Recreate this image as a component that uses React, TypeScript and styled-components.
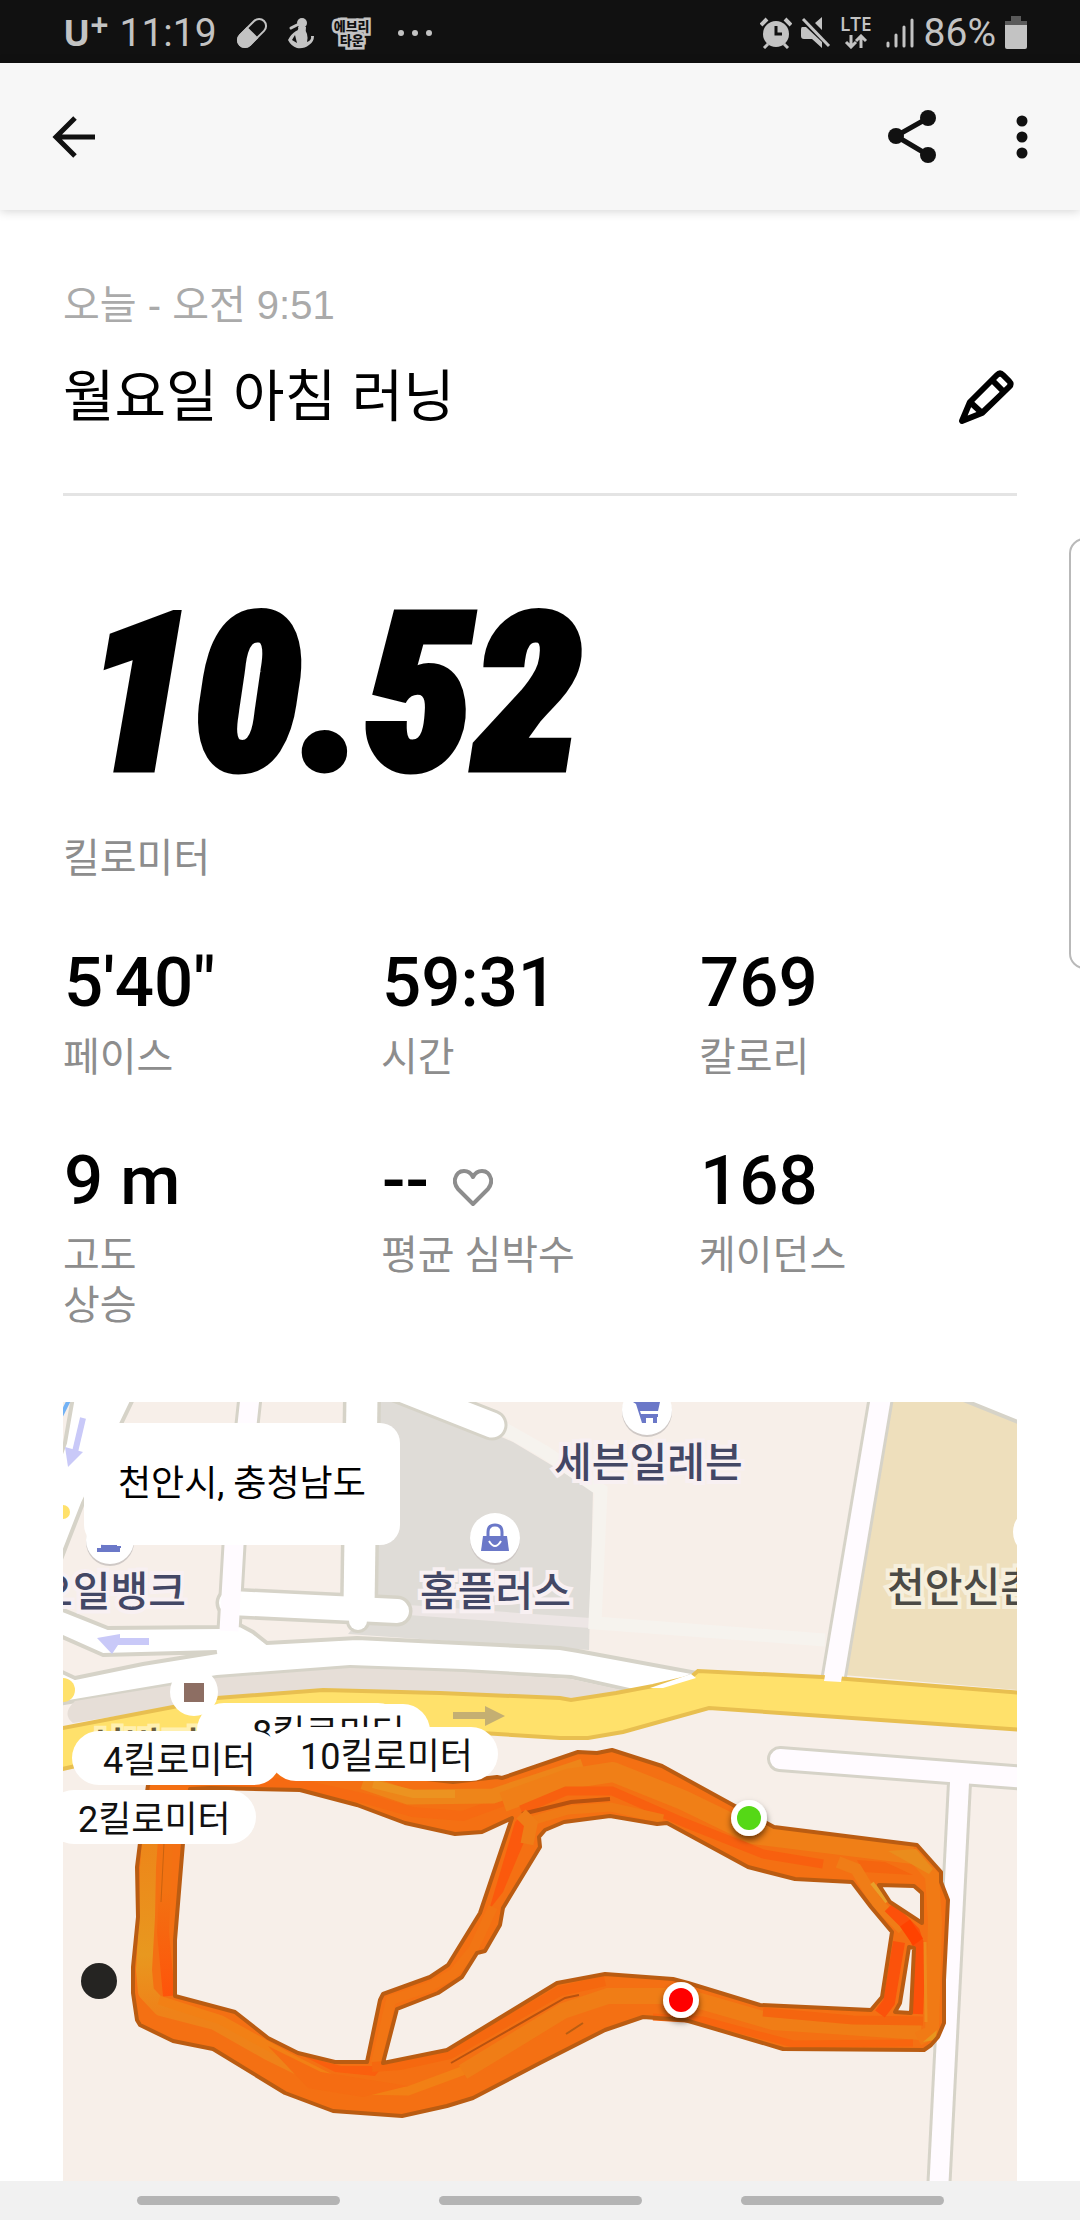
import React from 'react';
import styled, { createGlobalStyle } from 'styled-components';

const sans = `Roboto, "Liberation Sans", "Noto Sans CJK KR", sans-serif`;
const textSans = `"Liberation Sans", "Noto Sans CJK KR", sans-serif`;

const GlobalStyle = createGlobalStyle`
  * { box-sizing: border-box; }
  body { margin: 0; background: #fff; font-family: ${sans}; color: #000; }
`;

const Screen = styled.div`
  display: flex;
  flex-direction: column;
  height: 100vh;
  min-height: 1600px;
  position: relative;
  overflow: hidden;
`;

const StatusBar = styled.div`
  display: flex;
  justify-content: space-between;
  align-items: center;
  height: 63px;
  flex: none;
  padding: 2px 53px 0 63px;
  background: #111;
  color: #c3c3c3;
  font-size: 39px;
`;

const StatusGroup = styled.div<{ $gap: number }>`
  display: flex;
  align-items: center;
  gap: ${(p) => p.$gap}px;
`;

const Carrier = styled.span`
  display: flex;
  font: 700 36px/40px "Open Sans", sans-serif;
  margin-right: -8px;
`;

const CarrierPlus = styled.sup`
  font-size: 32px;
  line-height: 24px;
  vertical-align: top;
`;

const TownBadge = styled.span`
  display: flex;
  flex-direction: column;
  align-items: center;
  width: 36px;
  font: 900 13px/14px "Noto Sans CJK KR", sans-serif;
  color: #111;
  -webkit-text-stroke: 5px #c3c3c3;
  paint-order: stroke fill;
`;

const Network = styled.span`
  display: flex;
  flex-direction: column;
  align-items: center;
  gap: 2px;
  font: 600 19px/16px "Open Sans", sans-serif;
`;

const AppBar = styled.header`
  display: flex;
  align-items: center;
  justify-content: space-between;
  height: 147px;
  flex: none;
  padding: 0 30px 0 46px;
  background: #f7f7f7;
  box-shadow: 0 1px 10px rgba(0, 0, 0, 0.18);
  z-index: 1;
`;

const Actions = styled.div`
  display: flex;
  align-items: center;
  gap: 54px;
`;

const IconButton = styled.button`
  display: flex;
  padding: 0;
  border: 0;
  background: none;
  color: inherit;
  cursor: pointer;
`;

const Main = styled.main`
  display: flex;
  flex-direction: column;
  flex: 1;
  min-height: 0;
  padding: 71px 63px 0;
`;

const DateLine = styled.p`
  margin: 0;
  font-family: ${textSans};
  font-size: 40px;
  line-height: 48px;
  color: #aaa;
`;

const TitleRow = styled.div`
  display: flex;
  align-items: center;
  justify-content: space-between;
  margin-top: 36px;
  padding-bottom: 64px;
  border-bottom: 3px solid #e4e4e4;
`;

const Title = styled.h1`
  margin: 0;
  font-family: ${textSans};
  font-size: 56px;
  line-height: 64px;
  font-weight: 400;
`;

const Distance = styled.div`
  margin-top: 99px;
  padding-left: 22px;
  font: italic 900 218px/200px "Roboto Condensed", Roboto, sans-serif;
  -webkit-text-stroke: 7px #000;
`;

const Caption = styled.p<{ $top?: number }>`
  margin: ${(p) => p.$top ?? 14}px 0 0;
  font-size: 40px;
  line-height: 50px;
  color: #8d8d8d;
`;

const Stats = styled.section`
  display: grid;
  grid-template-columns: repeat(3, 1fr);
  row-gap: 62px;
  margin-top: 63px;
`;

const StatValue = styled.div`
  display: flex;
  align-items: flex-end;
  gap: 24px;
  padding-left: 1px;
  font-size: 69px;
  line-height: 72px;
  font-weight: 500;
`;

const Heart = styled.svg`
  margin-bottom: 10px;
`;

const MapBox = styled.section`
  position: relative;
  flex: 1;
  margin-top: 71px;
  overflow: hidden;
  background: #f7efe9;
`;

const MapArt = styled.svg`
  display: block;
  width: 100%;
  height: 100%;
`;

const Poi = styled.span<{ $x: number; $y: number; $color?: string; $halo?: string }>`
  position: absolute;
  left: ${(p) => p.$x}px;
  top: ${(p) => p.$y}px;
  font: 500 41px/48px "Noto Sans CJK KR", sans-serif;
  white-space: nowrap;
  color: ${(p) => p.$color ?? '#434765'};
  -webkit-text-stroke: 8px ${(p) => p.$halo ?? '#f8f0f2'};
  paint-order: stroke fill;
`;

const Place = styled.div`
  position: absolute;
  left: 21px;
  top: 21px;
  padding: 37px 34px;
  border-radius: 20px;
  background: #fff;
  font-size: 36px;
  line-height: 48px;
`;

const KmPill = styled.span<{ $x: number; $y: number }>`
  position: absolute;
  left: ${(p) => p.$x}px;
  top: ${(p) => p.$y}px;
  min-width: 208px;
  height: 54px;
  padding: 0 25px 0 31px;
  border-radius: 27px;
  background: #fff;
  color: #111;
  font-size: 36px;
  line-height: 60px;
  white-space: nowrap;
`;

const EdgeHandle = styled.div`
  position: absolute;
  right: -20px;
  top: 538px;
  width: 31px;
  height: 431px;
  border: 2px solid #b9b9b9;
  border-radius: 18px;
  background: #fff;
`;

const NavBar = styled.nav`
  display: flex;
  align-items: center;
  justify-content: center;
  gap: 99px;
  height: 39px;
  flex: none;
  background: #f1f1f1;
`;

const NavKey = styled.button`
  width: 203px;
  height: 9px;
  padding: 0;
  border: 0;
  border-radius: 5px;
  background: #b4b4b4;
`;

const road = '#d6d3c8';

type RoadProps = { d: string; outer: number; inner: number; cap?: 'round' | 'butt'; fill?: string };

const RoadCase = ({ d, outer, cap = 'butt' }: RoadProps) => (
  <path d={d} stroke={road} strokeWidth={outer} strokeLinecap={cap} fill="none" />
);
const RoadFill = ({ d, inner, cap = 'butt', fill = '#fff' }: RoadProps) => (
  <path d={d} stroke={fill} strokeWidth={inner} strokeLinecap={cap} fill="none" />
);

const streets: RoadProps[] = [
  { d: 'M330-16L429 23', outer: 31, inner: 25, cap: 'round' },
  { d: 'M299-5L296 205', outer: 38, inner: 31 },
  { d: 'M168 201L334 209', outer: 31, inner: 24, cap: 'round' },
  { d: 'M295 212V219', outer: 24, inner: 18, cap: 'round' },
  { d: 'M187-5L171 143L166 229', outer: 25, inner: 19, fill: '#fffbff' },
  { d: 'M818-5L770 280', outer: 26, inner: 20, fill: '#fffbff' },
  { d: 'M717 357L964 376', outer: 26, inner: 20, cap: 'round', fill: '#fffbff' },
  { d: 'M897 371L875 800', outer: 25, inner: 19, fill: '#fffbff' },
];

const routeOutline =
  'M85 383L100 366L214 360L390 380L434 375L439 376L515 350L534 351L549 348L599 364L670 403L711 425L854 443L878 470V480L885 498L881 578V621L875 635L868 643L861 648L720 647L622 618L580 615L542 628L477 661L410 696L384 704L339 714L270 709L222 691L150 647L110 639L77 623L74 618L70 591V565L75 515L74 465L77 441Z' +
  'M147 386L237 388L294 403L342 421L392 432L419 430L449 416L417 511L385 563L367 575L320 592L317 598L304 660L272 660L235 651L205 636L172 610L112 594V538L120 441L127 387Z' +
  'M320 661L334 607L375 591L399 575L414 551L422 549L437 523L440 506L477 445L476 435L482 428L501 420L547 414L594 422L604 421L685 465L732 477L789 480L808 505L829 530L819 595L808 608L697 603L625 581L610 577L542 572L494 581L384 648Z' +
  'M816 483L851 484L859 491V521L827 500Z' +
  'M846 545L851 546L848 611L832 610L837 601Z';

const MapDrawing = () => (
  <MapArt viewBox="0 0 954 779" preserveAspectRatio="xMinYMin slice" aria-hidden="true" fill="none">
    <defs>
      <filter id="pinShadow" x="-50%" y="-50%" width="200%" height="200%">
        <feDropShadow dx="0" dy="4" stdDeviation="3" floodOpacity="0.55" />
      </filter>
      <linearGradient id="amberLeft" x1="0" y1="380" x2="0" y2="610" gradientUnits="userSpaceOnUse">
        <stop offset="0" stopColor="#f07c16" />
        <stop offset="0.75" stopColor="#e8981f" />
        <stop offset="1" stopColor="#ef8219" />
      </linearGradient>
      <linearGradient id="redLeft" x1="0" y1="440" x2="0" y2="600" gradientUnits="userSpaceOnUse">
        <stop offset="0.3" stopColor="#f27212" />
        <stop offset="1" stopColor="#ff520a" />
      </linearGradient>
    </defs>

    {/* blocks */}
    <path d="M312 0H360L450 40L530 88L526 248L400 240L285 232L312 200Z" fill="#dfdcd7" />
    <path d="M345 208L527 221" stroke="#ede6e5" strokeWidth="10" />
    <path d="M436 24L482 50L538 88L532 221L762 238" stroke="#f6f3ee" strokeWidth="13" />
    <path d="M828 0H904L954 20V288L780 273Z" fill="#eedfbc" />
    <path d="M898-3L960 22V-3Z" fill="#fff" stroke={road} strokeWidth="4" />

    {/* white streets */}
    <path d="M10-5H71L20 101L-5 165V60L2 41Z" fill="#fff" stroke={road} strokeWidth="4" />
    <path d="M-2 14L6-2" stroke="#72b2f5" strokeWidth="4" />
    {streets.map((s) => (
      <RoadCase key={s.d} {...s} />
    ))}
    <path
      d="M-5 206L45 226L157 225L177 223L190 230L204 241L294 236L497 246L515 249L634 271L590 290L566 288L508 275L400 269L287 265L154 275L-5 302Z"
      fill="#fff"
      stroke={road}
      strokeWidth="4"
    />
    {streets.map((s) => (
      <RoadFill key={s.d} {...s} />
    ))}
    <path d="M-5 233L40 253L154 250L80 262L12 276L-5 268Z" fill="#f7efe9" stroke={road} strokeWidth="4" strokeLinejoin="round" />
    <path d="M154 250L200 243" stroke="#fff" strokeWidth="6" />

    {/* main road */}
    <path d="M12 299L154 276L287 266L400 270L508 277L568 290L508 300L380 294L260 290L154 298L10 321Q-2 312 12 299Z" fill="#e6ded7" />
    <path
      d="M-5 327L110 305L154 296L260 288L377 291L497 296L508 298L553 291L590 284L628 275L635 269L759 275L960 291V328L646 306L560 330L525 336L497 336L370 328L230 326L120 340L-5 368Z"
      fill="#ffe16b"
      stroke="#e8bf50"
      strokeWidth="4"
    />
    <path d="M587 286L628 272L633 276L600 286Z" fill="#fff" />
    <path d="M780 268L778 280L761 279L763 268Z" fill="#fffbff" />
    <circle cx="0" cy="288" r="12" fill="#ffe16b" />
    <circle cx="0" cy="110" r="7" fill="#ffe16b" />

    {/* one-way arrows */}
    <path d="M20 16L12 50" stroke="#c9c9f8" strokeWidth="6" />
    <path d="M2 45L20 50L5 65Z" fill="#c9c9f8" />
    <path d="M34 236L57 232V236H86V243H55L49 252Z" fill="#c9c9f8" />
    <path d="M390 310H422V304L442 314L422 324V317H390Z" fill="#c4af72" />

    {/* place markers */}
    <g fill="#fff">
      <circle cx="432" cy="138" r="25" fill="#cfc9c6" />
      <circle cx="432" cy="136" r="25" />
      <circle cx="47" cy="140" r="24" fill="#cfc9c6" />
      <circle cx="47" cy="138" r="24" />
      <circle cx="584" cy="10" r="25" fill="#cfc9c6" />
      <circle cx="584" cy="8" r="25" />
      <circle cx="131" cy="290" r="24" />
      <circle cx="974" cy="130" r="24" />
    </g>
    <path d="M420 134H444L446 149H418Z" fill="#6b78c8" />
    <path d="M425 135V130Q425 123 432 123Q439 123 439 130V135" stroke="#6b78c8" strokeWidth="3" />
    <path d="M426 139Q432 149 438 139" stroke="#fff" strokeWidth="2" />
    <path d="M34 150V146H38V138H54V144H58V146H57V150Z" fill="#6b78c8" />
    <path d="M570 0H597L595 9H577L578 12H595V15H594V21H590V16H583V21H579L573 2Z" fill="#6b78c8" />
    <rect x="121" y="281" width="20" height="19" fill="#8d6e63" />

    {/* run route */}
    <path d={routeOutline} fillRule="evenodd" fill="#f47013" />
    <path d="M90 395L85 465L84 515L81 568L83 590L98 606L152 620L205 650L270 682" stroke="url(#amberLeft)" strokeWidth="16" strokeLinejoin="round" />
    <path d="M104 441L100 530L106 594" stroke="url(#redLeft)" strokeWidth="12" />
    <path d="M101 441L98 500" stroke="#c9620f" strokeWidth="1" />
    <path d="M96 598L158 618L225 655L290 688L345 689L410 665" stroke="#f28015" strokeWidth="9" />
    <path d="M205 644L258 670L345 684L300 695L245 686Z" fill="#f56c12" />
    <path d="M240 654L278 664H320L312 674L272 670Z" fill="#fa5f0e" />
    <path d="M150 378L236 382L300 396L350 410L400 414L460 392" stroke="#f66a12" strokeWidth="10" />
    <path d="M300 380L345 395L430 394L520 364" stroke="#ee8519" strokeWidth="15" />
    <path d="M310 382L350 392L392 392" stroke="#ec9320" strokeWidth="8" />
    <path d="M440 400L505 377L550 370L620 398L690 432L850 452" stroke="#f07f17" strokeWidth="20" strokeLinejoin="round" />
    <path d="M458 408L503 389H549L620 420L700 452L760 462" stroke="#f8600f" strokeWidth="9" />
    <path d="M459 412L508 400L547 397" stroke="#b8520f" strokeWidth="4" />
    <path d="M465 420L505 408L548 405L600 417" stroke="#f07a15" strokeWidth="9" />
    <path d="M452 420L458 414L466 418L461 440L440 490L426 508Z" fill="#fb590d" />
    <path d="M458 412L468 422L464 442" stroke="#ef7d17" strokeWidth="13" />
    <path d="M430 505L410 548L390 572L366 585L328 598L312 665" stroke="#f27514" strokeWidth="10" />
    <path d="M309 665L337 663L387 652L497 589L542 579" stroke="#f5680f" strokeWidth="10" />
    <path d="M388 661L502 596L516 593" stroke="#b8520f" strokeWidth="2" />
    <path d="M400 670L500 609L545 594L620 594L710 620L858 630" stroke="#f07d16" strokeWidth="16" />
    <path d="M503 632L520 621" stroke="#b85d12" strokeWidth="2" />
    <path d="M590 615L640 618L730 642L850 641" stroke="#f8650f" strokeWidth="7" />
    <path d="M700 610L790 618L860 619" stroke="#f5650f" strokeWidth="9" />
    <path d="M850 452L869 474L872 520L869 630L855 637" stroke="#f17a15" strokeWidth="14" />
    <path d="M825 449L853 447L870 467L866 472Z" fill="#ea8c1c" />
    <path d="M794 458L822 460L850 473L800 470Z" fill="#f5650f" />
    <path d="M775 460L793 467L813 500L840 527" stroke="#f07d17" strokeWidth="12" />
    <path d="M809 481L824 500" stroke="#e8a02a" strokeWidth="4" />
    <path d="M826 505L851 530L857 548L854 612" stroke="#fc500a" strokeWidth="12" />
    <path d="M842 521L855 540" stroke="#ff4200" strokeWidth="12" />
    <path d="M836 540L826 600L817 612" stroke="#fb520b" strokeWidth="12" />
    <path d="M862 540L863 620" stroke="#ef8b1d" strokeWidth="3" />
    <path d="M860 640L874 628L872 638Z" fill="#e8961e" />
    <path d={routeOutline} fillRule="evenodd" stroke="#ba5c12" strokeWidth="4" strokeLinejoin="round" />

    <g filter="url(#pinShadow)">
      <circle cx="686" cy="416" r="18" fill="#fff" />
      <circle cx="618" cy="598" r="18" fill="#fff" />
    </g>
    <circle cx="686" cy="416" r="12" fill="#55d816" />
    <circle cx="618" cy="598" r="12" fill="#f00" />
    <circle cx="36" cy="579" r="18" fill="#252422" />
  </MapArt>
);

const HeartIcon = () => (
  <Heart width="40" height="38" viewBox="0 0 40 38" fill="none" stroke="#8d8d8d" strokeWidth="4" strokeLinejoin="round" aria-hidden="true">
    <path d="M20 35L5 20Q1 15 2 10Q4 2 11 2Q17 2 20 8Q23 2 29 2Q36 2 38 10Q39 15 35 20Z" />
  </Heart>
);

const stats: { value: string; label: React.ReactNode; heart?: boolean }[] = [
  { value: `5'40"`, label: '페이스' },
  { value: '59:31', label: '시간' },
  { value: '769', label: '칼로리' },
  { value: '9 m', label: <>고도<br />상승</> },
  { value: '--', label: '평균 심박수', heart: true },
  { value: '168', label: '케이던스' },
];

export default function App() {
  return (
    <Screen>
      <GlobalStyle />
      <StatusBar>
        <StatusGroup $gap={19}>
          <Carrier>U<CarrierPlus>+</CarrierPlus></Carrier>
          <span>11:19</span>
          <svg width="32" height="32" viewBox="0 0 32 32" aria-hidden="true">
            <g transform="rotate(45 16 16)">
              <rect x="9" y="-1" width="14" height="34" rx="7" fill="none" stroke="#c3c3c3" strokeWidth="2" />
              <path d="M8 15H24V26A8 8 0 0 1 8 26Z" fill="#c3c3c3" />
            </g>
          </svg>
          <svg width="28" height="32" viewBox="0 0 28 32" fill="#c3c3c3" aria-hidden="true">
            <circle cx="15" cy="6" r="5" />
            <path d="M11 10H19Q18 14 20 17Q21 20 20 25Q25 23 24 19H27Q27 25 22 28Q17 32 10 31Q4 29 1 23Q4 17 9 14Q12 13 11 10ZM8 18L5 23L10 26Z" />
            <path d="M4 11L10 8" stroke="#c3c3c3" strokeWidth="3" strokeLinecap="round" />
          </svg>
          <TownBadge><span>에브리</span><span>타운</span></TownBadge>
          <svg width="50" height="8" viewBox="0 0 50 8" fill="#c3c3c3" aria-hidden="true">
            <circle cx="12" cy="4" r="3" />
            <circle cx="26" cy="4" r="3" />
            <circle cx="40" cy="4" r="3" />
          </svg>
        </StatusGroup>
        <StatusGroup $gap={9}>
          <svg width="32" height="32" viewBox="0 0 32 32" fill="none" stroke="#c3c3c3" aria-hidden="true">
            <circle cx="16" cy="17" r="13" fill="#c3c3c3" stroke="none" />
            <path d="M1 8L7 2M31 8L25 2" strokeWidth="4" />
            <path d="M4 31L8 27M28 31L24 27" strokeWidth="3" />
            <path d="M16 9V17H22" stroke="#111" strokeWidth="3" />
          </svg>
          <svg width="30" height="32" viewBox="0 0 30 32" fill="#c3c3c3" aria-hidden="true">
            <path d="M1 10H5L21 25V31L11 22H3Q0 22 0 19V13Q0 10 1 10ZM21 0V13L14 6Z" />
            <path d="M2 2L28 29" stroke="#c3c3c3" strokeWidth="3" />
          </svg>
          <Network>
            LTE
            <svg width="24" height="15" viewBox="0 0 24 15" fill="none" stroke="#c3c3c3" strokeWidth="3" aria-hidden="true">
              <path d="M7 1V12M2 8L7 13L12 8M17 14V3M12 7L17 2L22 7" />
            </svg>
          </Network>
          <svg width="34" height="32" viewBox="0 0 34 32" stroke="#c3c3c3" strokeWidth="3" strokeLinecap="round" aria-hidden="true">
            <path d="M7 26V29M15 18V29M23 10V29M31 3V29" />
          </svg>
          <span>86%</span>
          <svg width="22" height="34" viewBox="0 0 22 34" aria-hidden="true">
            <path d="M6 0H16V5H22V12H0V5H6Z" fill="#5a5a5a" />
            <path d="M0 9H22V31Q22 33 20 33H2Q0 33 0 31Z" fill="#c3c3c3" />
          </svg>
        </StatusGroup>
      </StatusBar>

      <AppBar>
        <IconButton aria-label="뒤로">
          <svg width="56" height="56" viewBox="0 0 56 56" fill="none" stroke="#111" strokeWidth="5" aria-hidden="true">
            <path d="M29 9L10 28L29 47M9 28H49" />
          </svg>
        </IconButton>
        <Actions>
          <IconButton aria-label="공유">
            <svg width="56" height="56" viewBox="0 0 56 56" fill="#111" aria-hidden="true">
              <path d="M44 9L12 27L44 46" fill="none" stroke="#111" strokeWidth="5" />
              <circle cx="44" cy="9" r="8" />
              <circle cx="12" cy="27" r="8" />
              <circle cx="44" cy="46" r="8" />
            </svg>
          </IconButton>
          <IconButton aria-label="더보기">
            <svg width="56" height="56" viewBox="0 0 56 56" fill="#111" aria-hidden="true">
              <circle cx="28" cy="12" r="5.5" />
              <circle cx="28" cy="28" r="5.5" />
              <circle cx="28" cy="44" r="5.5" />
            </svg>
          </IconButton>
        </Actions>
      </AppBar>

      <Main>
        <DateLine>오늘 - 오전 9:51</DateLine>
        <TitleRow>
          <Title>월요일 아침 러닝</Title>
          <IconButton aria-label="제목 편집">
            <svg width="60" height="60" viewBox="0 0 60 60" fill="none" stroke="#000" strokeWidth="6" strokeLinejoin="round" aria-hidden="true">
              <path d="M5 54L13 35L40 8Q43 5 46 8L52 14Q55 17 52 20L25 46Z" />
              <path d="M13 35L25 46M35 13L47 25" />
            </svg>
          </IconButton>
        </TitleRow>
        <Distance>10.52</Distance>
        <Caption $top={39}>킬로미터</Caption>
        <Stats>
          {stats.map((s, i) => (
            <div key={i}>
              <StatValue>
                {s.value}
                {s.heart && <HeartIcon />}
              </StatValue>
              <Caption>{s.label}</Caption>
            </div>
          ))}
        </Stats>
        <MapBox aria-label="러닝 경로">
          <MapDrawing />
          <Poi $x={491} $y={33}>세븐일레븐</Poi>
          <Poi $x={357} $y={162}>홈플러스</Poi>
          <Poi $x={-28} $y={162}>오일뱅크</Poi>
          <Poi $x={824} $y={158} $color="#4b4a45" $halo="#f6efdc">천안신촌</Poi>
          <Poi $x={24} $y={318} $color="#6a5c3c" $halo="#fff0b0">신방지</Poi>
          <Place>천안시, 충청남도</Place>
          <KmPill $x={134} $y={301} aria-hidden="true" />
          <KmPill $x={158} $y={302}>8킬로미터</KmPill>
          <KmPill $x={9} $y={329}>4킬로미터</KmPill>
          <KmPill $x={206} $y={325}>10킬로미터</KmPill>
          <KmPill $x={-16} $y={388}>2킬로미터</KmPill>
        </MapBox>
      </Main>

      <NavBar aria-label="시스템">
        <NavKey aria-label="최근 앱" />
        <NavKey aria-label="홈" />
        <NavKey aria-label="이전" />
      </NavBar>
      <EdgeHandle />
    </Screen>
  );
}
